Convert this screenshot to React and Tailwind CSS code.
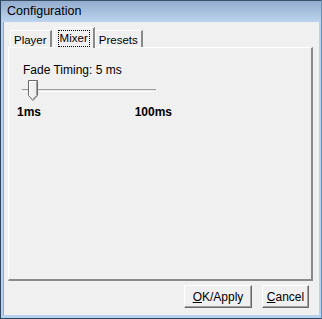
import React, { useState } from "react";

const font = { fontFamily: '"Liberation Sans", Arial, sans-serif' };

const Tab = ({ label, active, onClick }) => {
  if (active) {
    return (
      <div
        onClick={onClick}
        className="relative z-10 -mb-px h-[21px] px-[3px] pt-[2px] bg-[#f0f0f0] border-l border-t border-white border-r-2 border-r-[#8a8a8a] cursor-default"
      >
        <span className="inline-block px-[1px] leading-[15px] border border-dotted border-black">
          {label}
        </span>
      </div>
    );
  }
  return (
    <div
      onClick={onClick}
      className="h-[17px] mt-[3px] px-[3px] pt-[2px] leading-[14px] bg-[#f0f0f0] border-l border-t border-white border-r-2 border-r-[#8a8a8a] cursor-default"
    >
      {label}
    </div>
  );
};

const Button = ({ children, w }) => (
  <button
    className={`${w} h-[23px] bg-[#f0f0f0] border border-t-white border-l-white border-r-[#696969] border-b-[#696969] shadow-[inset_-1px_-1px_0_#a0a0a0] text-[12px] text-black leading-none`}
  >
    {children}
  </button>
);

export default function App() {
  const [tab, setTab] = useState("Mixer");
  const [fade] = useState(5);

  return (
    <div
      style={font}
      className="w-[322px] h-[319px] flex flex-col border-l border-b border-[#2e4560] border-r border-r-[#3aa0d8] bg-[#b6d2ee] text-black"
    >
      {/* TITLE BAR */}
      <div className="h-[22px] flex items-center pl-[6px] bg-gradient-to-b from-[#93adcf] to-[#bcd4ee] text-[12.5px] border-t border-[#3a4f66]">
        Configuration
      </div>

      {/* BODY */}
      <div className="flex-1 flex flex-col pl-[2px] pr-[2px] pb-[3px]">
        <div className="flex-1 flex flex-col bg-[#f0f0f0] border-l border-[#8ba7c4] pt-[4px]">
          {/* TABS */}
          <div className="flex items-end ml-[6px] text-[11.5px] h-[21px]">
            <div className="mr-[2px]">
              <Tab label="Player" active={tab === "Player"} onClick={() => setTab("Player")} />
            </div>
            <div>
              <Tab label="Mixer" active={tab === "Mixer"} onClick={() => setTab("Mixer")} />
            </div>
            <Tab label="Presets" active={tab === "Presets"} onClick={() => setTab("Presets")} />
          </div>

          {/* PANEL */}
          <div className="ml-[4px] mr-[6px] h-[234px] border-t border-l border-white border-r-2 border-b-2 border-r-[#8a8a8a] border-b-[#8a8a8a] text-[12px]">
            <div className="pt-[15px] pl-[14px] leading-[14px]">Fade Timing: {fade} ms</div>

            {/* SLIDER */}
            <div className="relative ml-[13px] mt-[3px] w-[134px] h-[22px]">
              <div className="absolute left-0 right-0 top-[9px] h-[3px] border-t border-[#a0a0a0] border-b border-b-white bg-[#e3e3e3]" />
              <svg className="absolute left-[6px] top-0" width="10" height="21" viewBox="0 0 10 21">
                <path d="M0.5 0.5 H9.5 V15.5 L5 20.5 L0.5 15.5 Z" fill="#f0f0f0" stroke="#696969" />
                <path d="M1.5 15 V1.5 H8.5" fill="none" stroke="#ffffff" />
                <path d="M8.5 1.5 V15.2 L5 19" fill="none" stroke="#a0a0a0" />
              </svg>
            </div>

            <div className="flex justify-between ml-[8px] mt-[3px] font-bold leading-[14px] w-[155px]">
              <span>1ms</span>
              <span>100ms</span>
            </div>
          </div>

          {/* BUTTONS */}
          <div className="flex justify-end gap-[10px] mr-[10px] mt-[4px]">
            <Button w="w-[68px]">
              <u>O</u>K/Apply
            </Button>
            <Button w="w-[47px]">
              <u>C</u>ancel
            </Button>
          </div>
        </div>
      </div>
    </div>
  );
}
